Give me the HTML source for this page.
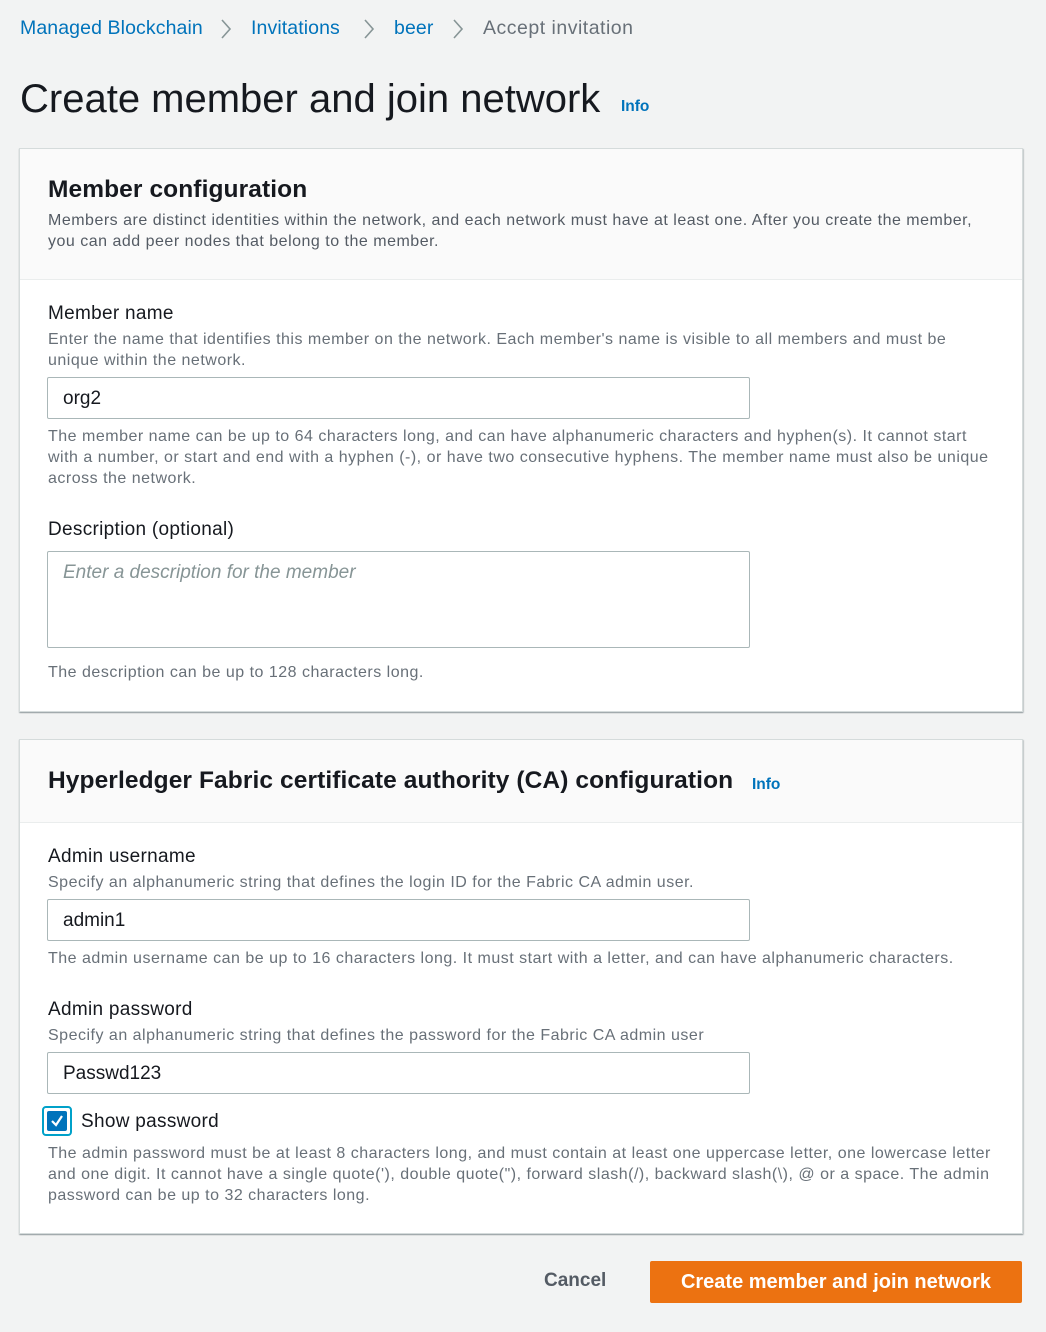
<!DOCTYPE html>
<html><head><meta charset="utf-8"><style>
*{margin:0;padding:0;box-sizing:border-box}
body{width:1046px;height:1332px;background:#f2f3f3;font-family:"Liberation Sans",sans-serif;position:relative;overflow:hidden;color:#16191f}
.a{position:absolute;white-space:nowrap}
.bc{font-size:19.5px;color:#0073bb;top:17px;letter-spacing:0.1px}
.sep{position:absolute;top:19px}
.panel{position:absolute;left:19px;width:1004px;background:#fff;border:1px solid #d5dbdb;box-shadow:0 1px 1px rgba(0,28,36,.3),1px 1px 1px rgba(0,28,36,.15)}
.hd{position:absolute;left:0;top:0;width:100%;background:#fafafa;border-bottom:1px solid #eaeded}
.h2{font-size:24.5px;font-weight:bold;color:#16191f;letter-spacing:0.1px}
.desc{font-size:16px;letter-spacing:0.5px;color:#545b64;line-height:21px}
.lbl{font-size:19px;letter-spacing:0.3px;color:#16191f}
.hint{font-size:16px;letter-spacing:0.5px;color:#687078;line-height:21px}
.inp{position:absolute;left:47px;width:703px;height:42px;border:1px solid #aab7b8;background:#fff;border-radius:2px;font-size:19px;padding:10px 15px;color:#16191f}
.info{font-size:15.5px;font-weight:bold;color:#0073bb}
</style></head><body>
<div class="a bc" style="left:20px">Managed Blockchain</div>
<svg class="sep" style="left:220px" width="12" height="20"><path d="M2 1l8 9-8 9" stroke="#879596" stroke-width="1.6" fill="none"/></svg>
<div class="a bc" style="left:251px">Invitations</div>
<svg class="sep" style="left:363px" width="12" height="20"><path d="M2 1l8 9-8 9" stroke="#879596" stroke-width="1.6" fill="none"/></svg>
<div class="a bc" style="left:394px">beer</div>
<svg class="sep" style="left:452px" width="12" height="20"><path d="M2 1l8 9-8 9" stroke="#879596" stroke-width="1.6" fill="none"/></svg>
<div class="a bc" style="left:483px;color:#687078;letter-spacing:0.5px">Accept invitation</div>
<div class="a" style="left:20px;top:77px;font-size:40px;color:#16191f">Create member and join network</div>
<div class="a info" style="left:621px;top:98px">Info</div>

<div class="panel" style="top:148px;height:564px">
 <div class="hd" style="height:131px"></div>
</div>
<div class="a h2" style="left:48px;top:176px">Member configuration</div>
<div class="a desc" style="left:48px;top:210px">Members are distinct identities within the network, and each network must have at least one. After you create the member,<br>you can add peer nodes that belong to the member.</div>
<div class="a lbl" style="left:48px;top:303px">Member name</div>
<div class="a hint" style="left:48px;top:329px">Enter the name that identifies this member on the network. Each member's name is visible to all members and must be<br>unique within the network.</div>
<div class="inp" style="top:377px">org2</div>
<div class="a hint" style="left:48px;top:426px">The member name can be up to 64 characters long, and can have alphanumeric characters and hyphen(s). It cannot start<br>with a number, or start and end with a hyphen (-), or have two consecutive hyphens. The member name must also be unique<br>across the network.</div>
<div class="a lbl" style="left:48px;top:519px">Description (optional)</div>
<div class="inp" style="top:551px;height:97px;color:#879596;font-style:italic">Enter a description for the member</div>
<div class="a hint" style="left:48px;top:662px">The description can be up to 128 characters long.</div>

<div class="panel" style="top:739px;height:495px">
 <div class="hd" style="height:83px"></div>
</div>
<div class="a h2" style="left:48px;top:767px">Hyperledger Fabric certificate authority (CA) configuration</div>
<div class="a info" style="left:752px;top:776px">Info</div>
<div class="a lbl" style="left:48px;top:846px">Admin username</div>
<div class="a hint" style="left:48px;top:872px">Specify an alphanumeric string that defines the login ID for the Fabric CA admin user.</div>
<div class="inp" style="top:899px">admin1</div>
<div class="a hint" style="left:48px;top:948px">The admin username can be up to 16 characters long. It must start with a letter, and can have alphanumeric characters.</div>
<div class="a lbl" style="left:48px;top:999px">Admin password</div>
<div class="a hint" style="left:48px;top:1025px">Specify an alphanumeric string that defines the password for the Fabric CA admin user</div>
<div class="inp" style="top:1052px">Passwd123</div>
<div class="a" style="left:42px;top:1106px;width:30px;height:30px;border:2px solid #00a1c9;border-radius:4px;background:#fff"></div>
<div class="a" style="left:47px;top:1111px;width:20px;height:20px;background:#0073bb;border-radius:2px"><svg width="20" height="20"><path d="M5 10l4 4 6-9" stroke="#fff" stroke-width="2.2" fill="none"/></svg></div>
<div class="a lbl" style="left:81px;top:1111px">Show password</div>
<div class="a hint" style="left:48px;top:1143px">The admin password must be at least 8 characters long, and must contain at least one uppercase letter, one lowercase letter<br>and one digit. It cannot have a single quote('), double quote("), forward slash(/), backward slash(\), @ or a space. The admin<br>password can be up to 32 characters long.</div>

<div class="a" style="left:544px;top:1270px;font-size:19px;font-weight:bold;color:#545b64">Cancel</div>
<div class="a" style="left:650px;top:1261px;width:372px;height:42px;background:#ec7211;border-radius:2px;color:#fff;font-size:20px;font-weight:bold;text-align:center;line-height:42px">Create member and join network</div>
</body></html>
